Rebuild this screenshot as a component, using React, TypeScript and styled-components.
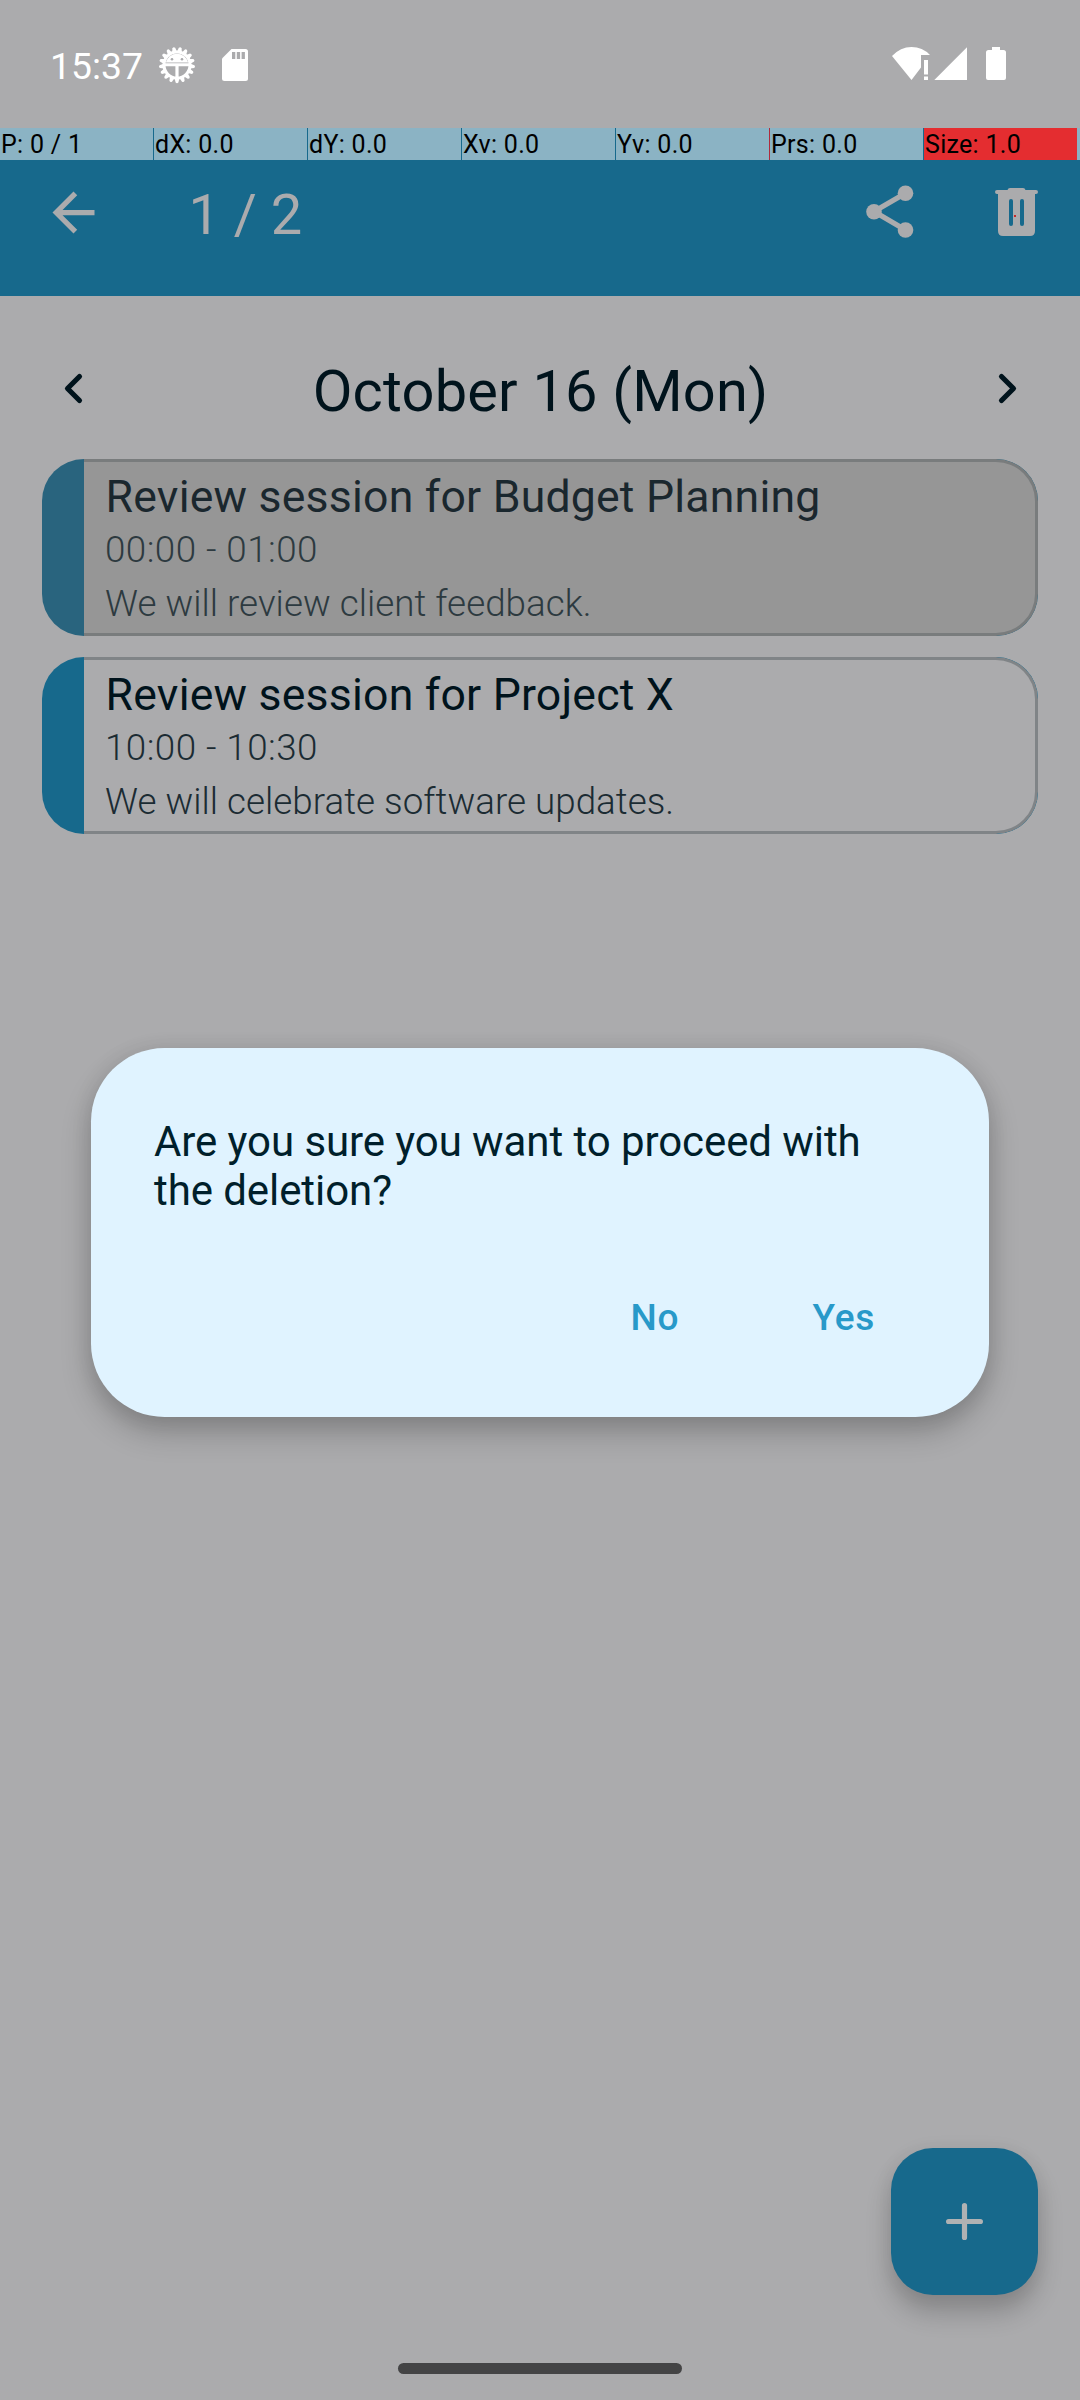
import React from "react";
import styled, { createGlobalStyle } from "styled-components";

const Global = createGlobalStyle`
  * { box-sizing: border-box; }
  html, body { margin: 0; padding: 0; background: #ababad; }
  body { font-family: Roboto, sans-serif; }
  button { font: inherit; border: 0; padding: 0; background: none; }
`;

const Screen = styled.div`
  position: relative;
  width: 1080px;
  height: 2400px;
  overflow: hidden;
  display: flex;
  flex-direction: column;
  background: #ababad;
`;

const StatusBar = styled.header`
  height: 128px;
  flex: none;
  display: flex;
  justify-content: space-between;
  align-items: flex-start;
  padding: 45px 74px 0 50px;
  color: #fff;
`;

const StatusGroup = styled.div`
  display: flex;
  align-items: center;
  height: 40px;
`;

const SignalGroup = styled(StatusGroup)`
  height: 38px;
`;

const Clock = styled.span`
  font-size: 37.3px;
  line-height: 40px;
  width: 108px;
  padding-top: 1px;
  white-space: nowrap;
`;

const SdSlot = styled.span`
  display: flex;
  margin-left: 26px;
`;

const PointerBar = styled.div`
  height: 32px;
  flex: none;
  display: grid;
  grid-template-columns: repeat(7, 153px) 3px;
  column-gap: 1px;
  background: #17698c;
`;

const PointerCell = styled.div<{ $bg?: string; $edge?: string }>`
  background: ${(p) => p.$bg ?? "#8bb3c4"};
  box-shadow: ${(p) => (p.$edge ? `-1px 0 0 ${p.$edge}` : "none")};
  padding-left: 1px;
  font-size: 25px;
  line-height: 33px;
  letter-spacing: 0.3px;
  color: #000;
  white-space: pre;
`;

const Toolbar = styled.div`
  height: 136px;
  flex: none;
  display: flex;
  align-items: flex-start;
  padding: 21px 42px 0 42px;
  background: #17698c;
  color: #ababad;
`;

const IconButton = styled.button<{ $ml?: number; $mt?: number }>`
  display: flex;
  color: inherit;
  margin: ${(p) => p.$mt ?? 0}px 0 0 ${(p) => p.$ml ?? 0}px;
`;

const Count = styled.h1`
  margin: 0 auto 0 83.5px;
  font-size: 56px;
  line-height: 68px;
  font-weight: 400;
`;

const DayNav = styled.nav`
  height: 163px;
  flex: none;
  display: flex;
  justify-content: space-between;
  align-items: flex-start;
  padding: 61px 40px 0 41px;
  color: #00131c;
`;

const DayTitle = styled.h2`
  margin: 0;
  font-size: 57.75px;
  line-height: 68px;
  font-weight: 400;
  letter-spacing: 0.2px;
  white-space: nowrap;
`;

const EventList = styled.main`
  display: flex;
  flex-direction: column;
  gap: 21px;
  padding: 0 42px;
`;

const EventCard = styled.article<{ $selected?: boolean }>`
  height: 177px;
  display: flex;
  border-radius: 42px;
  overflow: hidden;
  background: ${(p) => (p.$selected ? "#29647e" : "#17698c")};
  padding-left: 42px;
`;

const CardBody = styled.div<{ $selected?: boolean }>`
  flex: 1;
  padding: 9px 18px 0 21px;
  border: 3px solid ${(p) => (p.$selected ? "#797c7d" : "#808487")};
  border-left: 0;
  border-radius: 0 42px 42px 0;
  background: ${(p) => (p.$selected ? "#969696" : "#ababad")};
  color: ${(p) => (p.$selected ? "#1a272e" : "#00131c")};
`;

const EventTitle = styled.h3`
  margin: 0 0 0 0.6px;
  font-size: 44.6px;
  line-height: 52px;
  font-weight: 400;
  letter-spacing: 0.2px;
  white-space: nowrap;
`;

const EventLine = styled.p<{ $selected?: boolean; $spacing?: number }>`
  margin: 0;
  font-size: 36.75px;
  line-height: 54px;
  font-weight: 300;
  letter-spacing: ${(p) => p.$spacing ?? 0}px;
  white-space: nowrap;
  color: ${(p) => (p.$selected ? "#2d3a40" : "#1b2b33")};
`;

const Dialog = styled.section`
  position: absolute;
  left: 91px;
  top: 1048px;
  width: 898px;
  height: 369px;
  padding: 69px 63px 0;
  border-radius: 73.5px;
  background: #e0f3ff;
  box-shadow: 0 16px 30px rgba(0, 0, 0, 0.21), 0 2px 22px rgba(0, 0, 0, 0.09);
`;

const Message = styled.p`
  margin: 0;
  font-size: 42px;
  line-height: 49px;
  letter-spacing: -0.08px;
  color: #001f2b;
`;

const Actions = styled.div`
  display: flex;
  justify-content: flex-end;
  gap: 133.5px;
  padding: 81px 51px 0 0;
`;

const Action = styled.button`
  font-size: 37px;
  line-height: 44px;
  font-weight: 500;
  letter-spacing: 0.7px;
  color: #2899c9;
`;

const Fab = styled.button`
  position: absolute;
  left: 891px;
  top: 2148px;
  width: 147px;
  height: 147px;
  display: flex;
  align-items: center;
  justify-content: center;
  border-radius: 42px;
  background: #17698c;
  box-shadow: 0 18px 26px rgba(0, 0, 0, 0.2), 0 2px 20px rgba(0, 0, 0, 0.06);
`;

const HomeHandle = styled.div`
  position: absolute;
  left: 398px;
  top: 2363px;
  width: 284px;
  height: 11px;
  border-radius: 5.5px;
  background: #444445;
`;

const teeth = Array.from({ length: 17 }, (_, i) => 180 + (i * 360) / 17);

const GearIcon = () => (
  <svg width="38" height="38" viewBox="-19 -19 38 38" fill="#fff">
    {teeth.map((a) => (
      <path key={a} d="M-2.400 -13.300L-1.400 -17.400Q0 -18.900 1.400 -17.400L2.400 -13.300Z" transform={`rotate(${a})`} />
    ))}
    <circle r="13" fill="none" stroke="#fff" strokeWidth="3" />
    <path d="M-11.200 -2.400A11.500 11.500 0 0 1 11.200 -2.400Z" />
    <path d="M-12 -1.700H12V1.300H-12ZM-1.600 0H1.600V13H-1.600Z" />
    <circle cx="-5" cy="-5.800" r="1.300" fill="#ababad" />
    <circle cx="5" cy="-5.800" r="1.300" fill="#ababad" />
  </svg>
);

const SdIcon = () => (
  <svg width="26" height="32" viewBox="0 0 26 32">
    <path d="M9.5 0H23.5Q26 0 26 2.5V29.500Q26 32 23.500 32H2.500Q0 32 0 29.500V9.500Z" fill="#fff" />
    <path d="M10 3h3.300v7H10zM14.800 3h3.300v7h-3.300zM19.600 3h3.300v7h-3.300z" fill="#ababad" />
  </svg>
);

const SignalIcons = () => (
  <svg width="114" height="34" viewBox="0 0 114 34" fill="#fff">
    <path d="M0 9Q8.500 0 19.500 0T38 8H29V20.500L19.500 33Z" />
    <path d="M32 13h4V27.500h-4zM32 29.500h4V33h-4z" />
    <path d="M42.300 33L75 0.300V33Z" />
    <path d="M100 0h8v3h3.500q2.500 0 2.500 2.500v25.500q0 2-2 2h-16q-2 0-2-2V5.500q0-2.500 2.500-2.500h3.500z" />
  </svg>
);

const BackIcon = () => (
  <svg width="63" height="63" viewBox="0 0 24 24" fill="currentColor">
    <path d="M20 11H7.830l5.590-5.590L12 4l-8 8 8 8 1.410-1.410L7.830 13H20v-2z" />
  </svg>
);

const ShareIcon = () => (
  <svg width="48" height="54" viewBox="0 0 48 54">
    <path d="M39.500 8.300L8 26.500L39.500 45" fill="none" stroke="currentColor" strokeWidth="5.200" />
    <circle cx="39.500" cy="8.300" r="7.800" fill="currentColor" />
    <circle cx="8" cy="26.700" r="7.800" fill="currentColor" />
    <circle cx="39.500" cy="45" r="7.800" fill="currentColor" />
  </svg>
);

const TrashIcon = () => (
  <svg width="43" height="48" viewBox="0 0 43 48" fill="currentColor">
    <path d="M2 2H12.500Q13 0 15 0H28Q30 0 30.500 2H41Q43 2 43 4T41 6H40V43Q40 48 35 48H8Q3 48 3 43V6H2Q0 6 0 4T2 2Z" />
    <rect x="14" y="11" width="4" height="27" rx="2" fill="#17698c" />
    <rect x="25" y="11" width="4" height="27" rx="2" fill="#17698c" />
    <rect x="19" y="27" width="2" height="2" fill="#c62828" />
  </svg>
);

const Chevron = ({ flip }: { flip?: boolean }) => (
  <svg width="63" height="56" viewBox="0 0 63 56">
    <path
      d={flip ? "M24.500 15.500L36.500 27.500L24.500 39.500" : "M38.500 15.500L26.500 27.500L38.500 39.500"}
      fill="none"
      stroke="currentColor"
      strokeWidth="5.200"
      strokeLinecap="round"
      strokeLinejoin="round"
    />
  </svg>
);

const PlusIcon = () => (
  <svg width="37" height="37" viewBox="0 0 37 37">
    <path d="M18.500 2.600V34.400M2.600 18.500H34.400" stroke="#b0b2b3" strokeWidth="5.200" strokeLinecap="round" />
  </svg>
);

const pointerCells = [
  { text: "P: 0 / 1" },
  { text: "dX: 0.0" },
  { text: "dY: 0.0" },
  { text: "Xv: 0.0" },
  { text: "Yv: 0.0" },
  { text: "Prs: 0.0", edge: "#b02a3c" },
  { text: "Size: 1.0", bg: "#e42d30" },
  { text: "", edge: "#8bb3c4" },
];

const events = [
  { title: "Review session for Budget Planning", time: "00:00 - 01:00", note: "We will review client feedback.", selected: true },
  { title: "Review session for Project X", time: "10:00 - 10:30", note: "We will celebrate software updates.", selected: false },
];

export default function App() {
  return (
    <Screen>
      <Global />
      <StatusBar>
        <StatusGroup>
          <Clock>15:37</Clock>
          <GearIcon />
          <SdSlot><SdIcon /></SdSlot>
        </StatusGroup>
        <SignalGroup>
          <SignalIcons />
        </SignalGroup>
      </StatusBar>
      <PointerBar>
        {pointerCells.map((c, i) => (
          <PointerCell key={i} $bg={c.bg} $edge={c.edge}>{c.text}</PointerCell>
        ))}
      </PointerBar>
      <Toolbar>
        <IconButton aria-label="Back"><BackIcon /></IconButton>
        <Count>1 / 2</Count>
        <IconButton aria-label="Share" $mt={4}><ShareIcon /></IconButton>
        <IconButton aria-label="Delete" $ml={81} $mt={7}><TrashIcon /></IconButton>
      </Toolbar>
      <DayNav>
        <IconButton aria-label="Previous day" $mt={4}><Chevron /></IconButton>
        <DayTitle>October 16 (Mon)</DayTitle>
        <IconButton aria-label="Next day" $mt={4}><Chevron flip /></IconButton>
      </DayNav>
      <EventList>
        {events.map((e) => (
          <EventCard key={e.title} $selected={e.selected}>
            <CardBody $selected={e.selected}>
              <EventTitle>{e.title}</EventTitle>
              <EventLine $selected={e.selected} $spacing={0.45}>{e.time}</EventLine>
              <EventLine $selected={e.selected} $spacing={0.03}>{e.note}</EventLine>
            </CardBody>
          </EventCard>
        ))}
      </EventList>
      <Fab aria-label="Add event"><PlusIcon /></Fab>
      <Dialog role="dialog">
        <Message>Are you sure you want to proceed with the deletion?</Message>
        <Actions>
          <Action>No</Action>
          <Action>Yes</Action>
        </Actions>
      </Dialog>
      <HomeHandle />
    </Screen>
  );
}
